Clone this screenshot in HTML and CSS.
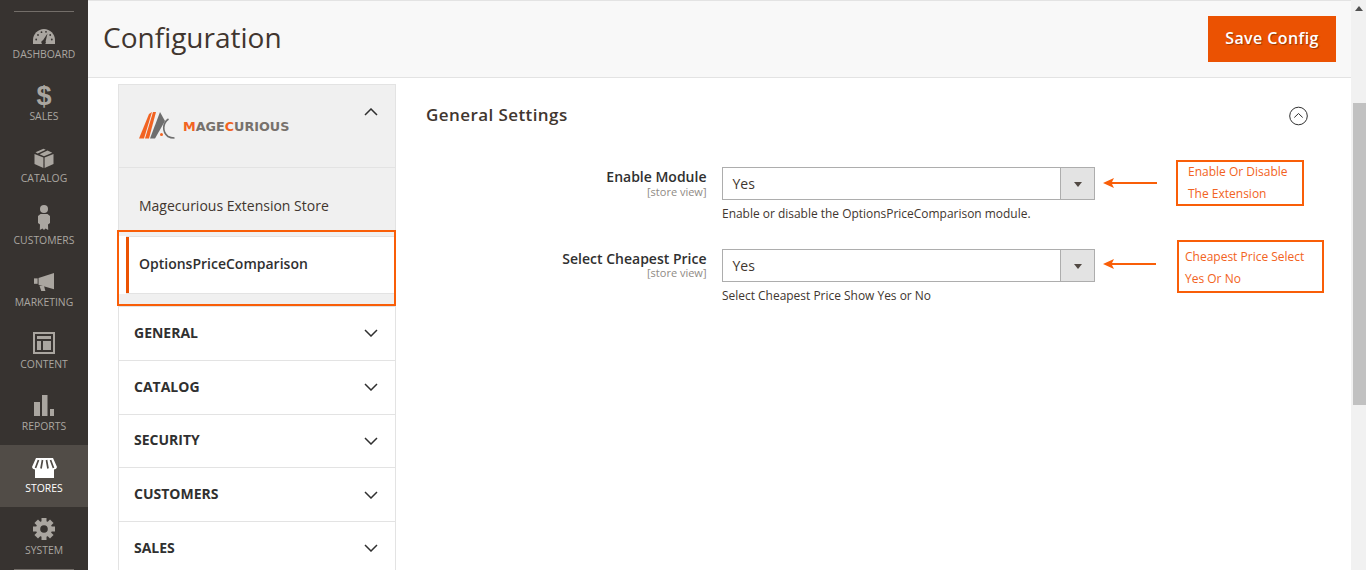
FILE: index.html
```html
<!DOCTYPE html>
<html lang="en">
<head>
<meta charset="utf-8">
<title>Configuration</title>
<link rel="stylesheet" href="styles.css">
</head>
<body>
<nav class="sidebar">
  <div class="nav-rule"></div>
  <a class="nav-item"><svg class="ico" viewBox="0 0 22 15" width="22" height="15"><path d="M0 15v-4C0 5 5 0 11 0s11 5 11 11v4z" fill="#aaa6a0"/><path d="M14.500 4.500L10 11.200a2.200 2.200 0 1 0 2.600 1.200z" fill="#373330"/><g fill="#373330"><circle cx="3.200" cy="10.500" r=".9"/><circle cx="5" cy="6" r=".9"/><circle cx="8.500" cy="3.200" r=".9"/><circle cx="13" cy="2.800" r=".9"/><circle cx="17.200" cy="6" r=".9"/><circle cx="18.800" cy="10.500" r=".9"/></g></svg><span>DASHBOARD</span></a>
  <a class="nav-item"><span class="dollar">$</span><span>SALES</span></a>
  <a class="nav-item"><svg class="ico" viewBox="0 0 20 20" width="20" height="20"><path d="M.5 6l8.900 3.500V20L.5 16z" fill="#aaa6a0"/><path d="M19.500 6l-8.900 3.500V20l8.900-4z" fill="#aaa6a0"/><path d="M1.500 4.300L9.500 .8l2.200 1-8 3.600zM5.500 6.200l8-3.700 4.800 2.300L10 8.300z" fill="#aaa6a0"/></svg><span>CATALOG</span></a>
  <a class="nav-item"><svg class="ico" viewBox="0 0 12 25" width="12" height="25"><circle cx="6" cy="4" r="4" fill="#aaa6a0"/><path d="M2.500 9h7L12 11v7l-2 1.500.2 5.500-2.700-1.500L6 25l-1.500-1.500L1.800 25 2 19.500 0 18v-7z" fill="#aaa6a0"/></svg><span>CUSTOMERS</span></a>
  <a class="nav-item"><svg class="ico" viewBox="0 0 24 22" width="22" height="20"><path d="M1 7h4v6H1z" fill="#aaa6a0"/><path d="M6 6.500L23 1v18L6 14z" fill="#aaa6a0"/><path d="M7 15h5l1.500 6H9z" fill="#aaa6a0"/></svg><span>MARKETING</span></a>
  <a class="nav-item"><svg class="ico" viewBox="0 0 22 22" width="22" height="22"><path d="M0 0h22v22H0zM2 2v18h18V2z" fill="#aaa6a0" fill-rule="evenodd"/><path d="M4 4h14v3H4zM4 9h4v9H4zM10 9h8v9h-8z" fill="#aaa6a0"/></svg><span>CONTENT</span></a>
  <a class="nav-item"><svg class="ico" viewBox="0 0 20 21" width="20" height="21"><path d="M0 7h6v14H0zM8 0h5.500v21H8zM16 14h4v7h-4z" fill="#aaa6a0"/></svg><span>REPORTS</span></a>
  <a class="nav-item active"><svg class="ico" viewBox="0 0 25 20" width="25" height="20"><path d="M4 0h17l4 9c-.5 1.800-2 2.500-3 2.500V20H3v-8.500c-1 0-2.500-.7-3-2.500z" fill="#fff"/><path d="M6.500 2L3.500 10M10.500 2L9 10.500M14.500 2l1.500 8.500M18.500 2l3 8" stroke="#514c47" stroke-width="1.700" fill="none"/></svg><span>STORES</span></a>
  <a class="nav-item"><svg class="ico" viewBox="0 0 22 22" width="22" height="22"><g fill="#aaa6a0"><circle cx="11" cy="11" r="8"/><rect x="8.500" y="0" width="5" height="22"/><rect x="8.500" y="0" width="5" height="22" transform="rotate(45 11 11)"/><rect x="8.500" y="0" width="5" height="22" transform="rotate(90 11 11)"/><rect x="8.500" y="0" width="5" height="22" transform="rotate(135 11 11)"/></g><circle cx="11" cy="11" r="3.800" fill="#373330"/></svg><span>SYSTEM</span></a>
  <div class="nav-rule"></div>
</nav>

<div class="page">
  <header class="page-head">
    <h1>Configuration</h1>
    <button class="save" type="button">Save Config</button>
  </header>
  <div class="content">
    <aside class="tabs">
      <div class="brand">
        <svg class="brand-mark" viewBox="0 0 37 28" width="37" height="28"><path d="M0 27.500h5L13 1l-3 2z" fill="#f26322"/><path d="M6 27.500h4L17 1h-3z" fill="#f26322"/><path d="M11 27.500h5L26 10 21 1z" fill="#6e6e6e"/><circle cx="22.500" cy="23.500" r="1.500" fill="#f26322"/><path d="M29.500 8C23.500 12 23 21 29 25.500c2 1.200 4.500 1.500 6.500 1.500" stroke="#6e6e6e" stroke-width="1.600" fill="none"/></svg>
        <span class="brand-name"><b>M</b>AGE<b>C</b>URIOUS</span>
        <svg class="chev" viewBox="0 0 14 8" width="14" height="8"><path d="M1 7l6-6 6 6" fill="none" stroke="#303030" stroke-width="1.500"/></svg>
      </div>
      <div class="sub-link">Magecurious Extension Store</div>
      <div class="sub-link current">OptionsPriceComparison</div>
      <div class="sub-end"></div>
      <div class="tab"><span>GENERAL</span><svg class="chev" viewBox="0 0 14 8" width="14" height="8"><path d="M1 1l6 6 6-6" fill="none" stroke="#303030" stroke-width="1.500"/></svg></div>
      <div class="tab"><span>CATALOG</span><svg class="chev" viewBox="0 0 14 8" width="14" height="8"><path d="M1 1l6 6 6-6" fill="none" stroke="#303030" stroke-width="1.500"/></svg></div>
      <div class="tab"><span>SECURITY</span><svg class="chev" viewBox="0 0 14 8" width="14" height="8"><path d="M1 1l6 6 6-6" fill="none" stroke="#303030" stroke-width="1.500"/></svg></div>
      <div class="tab"><span>CUSTOMERS</span><svg class="chev" viewBox="0 0 14 8" width="14" height="8"><path d="M1 1l6 6 6-6" fill="none" stroke="#303030" stroke-width="1.500"/></svg></div>
      <div class="tab"><span>SALES</span><svg class="chev" viewBox="0 0 14 8" width="14" height="8"><path d="M1 1l6 6 6-6" fill="none" stroke="#303030" stroke-width="1.500"/></svg></div>
      <div class="mark-current"></div>
    </aside>
    <main class="settings">
      <div class="section-head">
        <h2>General Settings</h2>
        <svg class="collapse" viewBox="0 0 20 20" width="20" height="20"><circle cx="9.500" cy="10" r="8.800" fill="none" stroke="#303030" stroke-width="1"/><path d="M5.300 11.500L9.500 7.500l4.200 4" fill="none" stroke="#303030" stroke-width="1"/></svg>
      </div>
      <div class="field">
        <div class="label"><strong>Enable Module</strong><small>[store view]</small></div>
        <div class="control">
          <div class="select"><span>Yes</span><i class="select-btn"></i></div>
          <p>Enable or disable the OptionsPriceComparison module.</p>
        </div>
      </div>
      <div class="field">
        <div class="label"><strong>Select Cheapest Price</strong><small>[store view]</small></div>
        <div class="control">
          <div class="select"><span>Yes</span><i class="select-btn"></i></div>
          <p>Select Cheapest Price Show Yes or No</p>
        </div>
      </div>
    </main>
  </div>
  <svg class="arrow arrow-a" viewBox="0 0 54 10" width="54" height="10"><path d="M0 5L11 0 9 4h45v2H9l2 4z" fill="#f95e08"/></svg>
  <svg class="arrow arrow-b" viewBox="0 0 53 10" width="53" height="10"><path d="M0 5L11 0 9 4h44v2H9l2 4z" fill="#f95e08"/></svg>
  <div class="note note-a"><span>Enable Or Disable<br>The Extension</span></div>
  <div class="note note-b"><span>Cheapest Price Select<br>Yes Or No</span></div>
</div>
<div class="scrollbar"><i class="scroll-up"></i><i class="scroll-thumb"></i></div>
</body>
</html>
```
FILE: styles.css
```css
* { box-sizing: border-box; }
html, body { height: 100%; }
body {
  margin: 0;
  display: flex;
  height: 570px;
  overflow: hidden;
  background: #fff;
  color: #303030;
  font-family: "Open Sans", sans-serif;
  font-size: 14px;
}
.sidebar {
  flex: 0 0 88px;
  background: #373330;
  padding-top: 11px;
  color: #aaa6a0;
  position: relative;
}
.nav-rule { height: 1px; margin: 0 14px; background: #736e69; }
.nav-item {
  height: 62px;
  display: flex;
  flex-direction: column;
  align-items: center;
  justify-content: flex-end;
  gap: 3px;
  padding-bottom: 12px;
  font-size: 10.400px;
  line-height: 14px;
}
.nav-item:first-of-type { margin-top: -1px; }
.nav-item.active { background: #514c47; color: #fff; }
.ico { display: block; }
.dollar {
  font-size: 27px;
  font-weight: 700;
  line-height: 24px;
  margin-bottom: -2px;
  font-family: "Liberation Sans", sans-serif;
}
.page { flex: 1; min-width: 0; position: relative; }
.page-head {
  height: 78px;
  padding: 16px 15px 0 15px;
  display: flex;
  justify-content: space-between;
  align-items: flex-start;
  background: #f8f8f8;
  border-top: 1px solid #e3e3e3;
  border-bottom: 1px solid #e3e3e3;
}
.page-head h1 {
  margin: 0;
  font-size: 28px;
  font-weight: 400;
  line-height: 40px;
  color: #41362f;
}
.save {
  width: 128px;
  height: 46px;
  margin-top: -1px;
  border: 0;
  background: #eb5202;
  color: #fff;
  font: 600 16px/44px "Open Sans", sans-serif;
  padding: 0 0 2px;
  text-shadow: 1px 1px 1px rgba(0,0,0,.35);
  letter-spacing: .4px;
}
.content { display: flex; padding: 6px 0 0 30px; }
.tabs { flex: 0 0 278px; position: relative; border-left: 1px solid #e3e3e3; border-right: 1px solid #e3e3e3; }
.brand {
  height: 84px;
  background: #f0f0f0;
  border-top: 1px solid #e3e3e3;
  border-bottom: 1px solid #e3e3e3;
  display: flex;
  align-items: center;
  padding: 0 17px 0 20px;
}
.brand-mark { margin-top: -2px; flex: none; }
.brand-name {
  margin-left: 7px;
  margin-top: 1px;
  font: 700 12.750px "DejaVu Sans", sans-serif;
  color: #77716c;
}
.brand-name b { color: #f26322; }
.brand .chev { margin-left: auto; margin-top: -28px; }
.sub-link {
  height: 68px;
  background: #f0f0f0;
  padding: 6px 0 0 20px;
  display: flex;
  align-items: center;
  color: #41362f;
  font-size: 14px;
}
.sub-link.current {
  height: 58px;
  padding: 0 0 4px 13px;
  background: #fff;
  font-weight: 600;
  color: #303030;
  border-top: 1px solid #e3e3e3;
  border-bottom: 1px solid #e3e3e3;
  box-shadow: inset 3px 0 0 #eb5202;
  margin-left: 7px;
}
.sub-end { height: 12px; background: #f0f0f0; }
.tab {
  height: 53.750px;
  padding: 0 17px 2px 15px;
  display: flex;
  align-items: center;
  justify-content: space-between;
  border-top: 1px solid #e3e3e3;
  font-weight: 700;
  font-size: 14px;
  color: #303030;
}
.tab .chev { margin-top: 2px; }
.mark-current {
  position: absolute;
  left: -2px;
  right: -1px;
  top: 146px;
  height: 76px;
  border: 2px solid #f95e08;
}
.settings { flex: 1; padding: 0 43px 0 30px; }
.section-head {
  display: flex;
  justify-content: space-between;
  align-items: center;
  height: 62px;
  margin-bottom: 21px;
}
.section-head h2 {
  margin: -2px 0 0;
  font-size: 17px;
  font-weight: 600;
  letter-spacing: .42px;
  color: #41362f;
}
.collapse { display: block; margin: 2px -1px 0 0; }
.field { display: flex; margin-bottom: 27px; }
.label { flex: 0 0 280.500px; text-align: right; padding-top: 1px; }
.label strong { display: block; font-weight: 600; font-size: 14px; line-height: 17px; color: #303030; }
.label small { display: block; font-size: 11px; line-height: 11px; color: #8f8a85; }
.section-head + .field .label small { margin-top: 1px; }
.control { margin-left: 15.500px; width: 373px; }
.select {
  height: 33px;
  border: 1px solid #adadad;
  display: flex;
  align-items: center;
  justify-content: space-between;
  padding-left: 9.500px;
  font-size: 14px;
  color: #41362f;
}
.select-btn {
  position: relative;
  width: 34px;
  height: 100%;
  background: #e3e3e3;
  border-left: 1px solid #adadad;
}
.select-btn::after {
  content: "";
  position: absolute;
  left: 13px;
  top: 14px;
  border: 4.500px solid transparent;
  border-top: 5px solid #514943;
  border-bottom: 0;
}
.control p { margin: 5px 0 0; font-size: 11.960px; line-height: 17px; color: #41362f; }
.arrow { position: absolute; display: block; }
.arrow-a { left: 1015px; top: 178px; }
.arrow-b { left: 1015px; top: 259px; }
.note {
  position: absolute;
  border: 2px solid #f95e08;
  color: #f26322;
  font-size: 12px;
  line-height: 22px;
}
.note span { display: block; }
.note-a { left: 1088px; top: 160px; width: 128px; height: 46px; padding: 0 0 0 10px; }
.note-a span { margin-top: -1px; }
.note-b { left: 1089px; top: 240px; width: 147px; height: 53px; padding: 4px 0 0 6px; }
.scrollbar { flex: 0 0 15px; background: #f1f1f1; position: relative; }
.scroll-up {
  position: absolute;
  left: 4px;
  top: 6px;
  border: 4px solid transparent;
  border-bottom: 5px solid #505050;
  border-top: 0;
}
.scroll-thumb {
  position: absolute;
  left: 2px;
  right: 0;
  top: 103px;
  height: 302px;
  background: #c1c1c1;
}
```
